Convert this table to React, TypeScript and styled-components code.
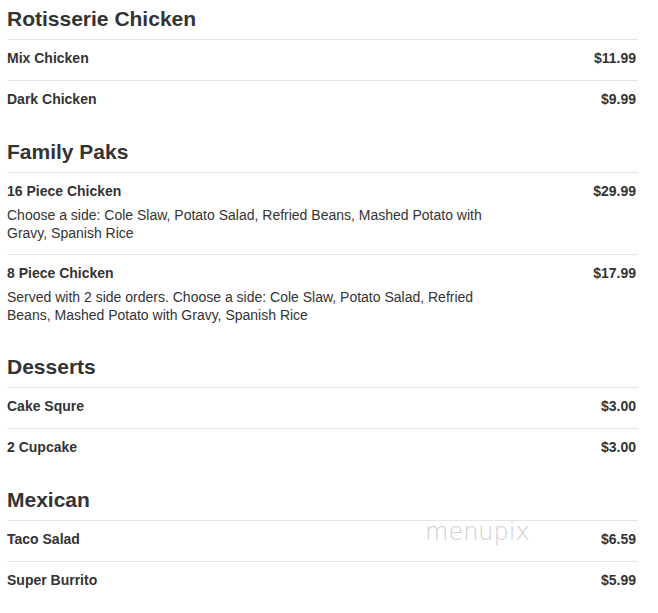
import React from "react";
import styled, { createGlobalStyle } from "styled-components";

const GlobalStyle = createGlobalStyle`
  html, body { margin: 0; padding: 0; background: #fff; }
  body { font-family: "Liberation Sans", Arial, sans-serif; color: #333; }
`;

const Page = styled.div`
  position: relative;
  width: 631px;
  padding: 7px 0 0 7px;
`;

const Section = styled.section`
  & + & { margin-top: 19px; }
`;

const Heading = styled.h2`
  margin: 0;
  font-size: 21px;
  line-height: 24px;
  font-weight: 700;
  color: #333;
  padding-bottom: 8px;
  border-bottom: 1px solid #e5e5e5;
`;

const Row = styled.div<{ $last?: boolean }>`
  display: flex;
  justify-content: space-between;
  align-items: flex-start;
  padding: 8px 2px 12px 0;
  border-bottom: ${(p) => (p.$last ? "none" : "1px solid #e5e5e5")};
`;

const Info = styled.div`
  display: flex;
  flex-direction: column;
`;

const Name = styled.div`
  font-size: 14px;
  line-height: 20px;
  font-weight: 700;
  color: #333;
`;

const Desc = styled.div`
  margin-top: 5px;
  max-width: 492px;
  font-size: 14px;
  line-height: 18px;
  color: #333;
`;

const Price = styled.div`
  font-size: 14px;
  line-height: 20px;
  font-weight: 700;
  color: #333;
`;

const Watermark = styled.div`
  position: absolute;
  left: 425px;
  top: 518px;
  font-family: "DejaVu Sans", sans-serif;
  font-weight: 200;
  font-size: 24px;
  color: #cfcfcf;
  pointer-events: none;
`;

type Item = { name: string; price: string; desc?: string };
type Sec = { title: string; items: Item[] };

const menu: Sec[] = [
  {
    title: "Rotisserie Chicken",
    items: [
      { name: "Mix Chicken", price: "$11.99" },
      { name: "Dark Chicken", price: "$9.99" },
    ],
  },
  {
    title: "Family Paks",
    items: [
      {
        name: "16 Piece Chicken",
        price: "$29.99",
        desc: "Choose a side: Cole Slaw, Potato Salad, Refried Beans, Mashed Potato with Gravy, Spanish Rice",
      },
      {
        name: "8 Piece Chicken",
        price: "$17.99",
        desc: "Served with 2 side orders. Choose a side: Cole Slaw, Potato Salad, Refried Beans, Mashed Potato with Gravy, Spanish Rice",
      },
    ],
  },
  {
    title: "Desserts",
    items: [
      { name: "Cake Squre", price: "$3.00" },
      { name: "2 Cupcake", price: "$3.00" },
    ],
  },
  {
    title: "Mexican",
    items: [
      { name: "Taco Salad", price: "$6.59" },
      { name: "Super Burrito", price: "$5.99" },
    ],
  },
];

export default function App() {
  return (
    <>
      <GlobalStyle />
      <Page>
        {menu.map((s) => (
          <Section key={s.title}>
            <Heading>{s.title}</Heading>
            {s.items.map((it, i) => (
              <Row key={it.name} $last={i === s.items.length - 1}>
                <Info>
                  <Name>{it.name}</Name>
                  {it.desc && <Desc>{it.desc}</Desc>}
                </Info>
                <Price>{it.price}</Price>
              </Row>
            ))}
          </Section>
        ))}
        <Watermark>menupix</Watermark>
      </Page>
    </>
  );
}
